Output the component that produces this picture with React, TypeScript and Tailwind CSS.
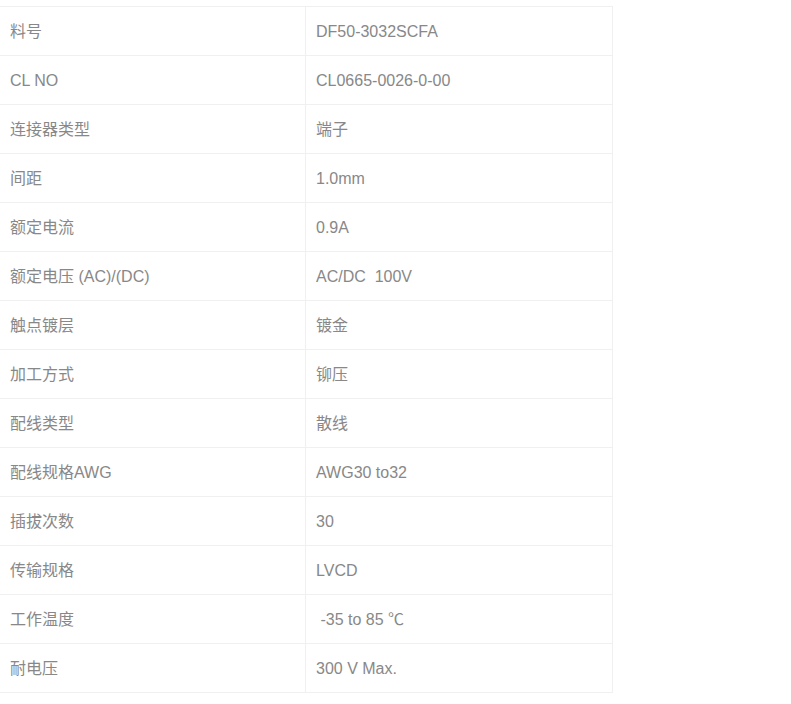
import React from 'react'

const ROWS: [string, string][] = [
  ['料号', 'DF50-3032SCFA'],
  ['CL NO', 'CL0665-0026-0-00'],
  ['连接器类型', '端子'],
  ['间距', '1.0mm'],
  ['额定电流', '0.9A'],
  ['额定电压 (AC)/(DC)', 'AC/DC  100V'],
  ['触点镀层', '镀金'],
  ['加工方式', '铆压'],
  ['配线类型', '散线'],
  ['配线规格AWG', 'AWG30 to32'],
  ['插拔次数', '30'],
  ['传输规格', 'LVCD'],
  ['工作温度', ' -35 to 85 ℃'],
  ['耐电压', '300 V Max.'],
]

export default function App() {
  return (
    <div className="min-h-[704px] bg-white pt-[6px] font-['Liberation_Sans','Noto_Sans_CJK_SC',sans-serif] text-[16px] text-[#888888]">
      <table className="w-[613px] border-collapse">
        <tbody>
          {ROWS.map(([k, v], i) => (
            <tr key={i} className="h-[49px]">
              <td className="w-[305px] border border-[#f0f0f0] border-l-white pl-[9px] pt-px align-middle">{k}</td>
              <td className="border border-[#f0f0f0] pl-[10px] pt-px align-middle whitespace-pre">{v}</td>
            </tr>
          ))}
        </tbody>
      </table>
    </div>
  )
}
